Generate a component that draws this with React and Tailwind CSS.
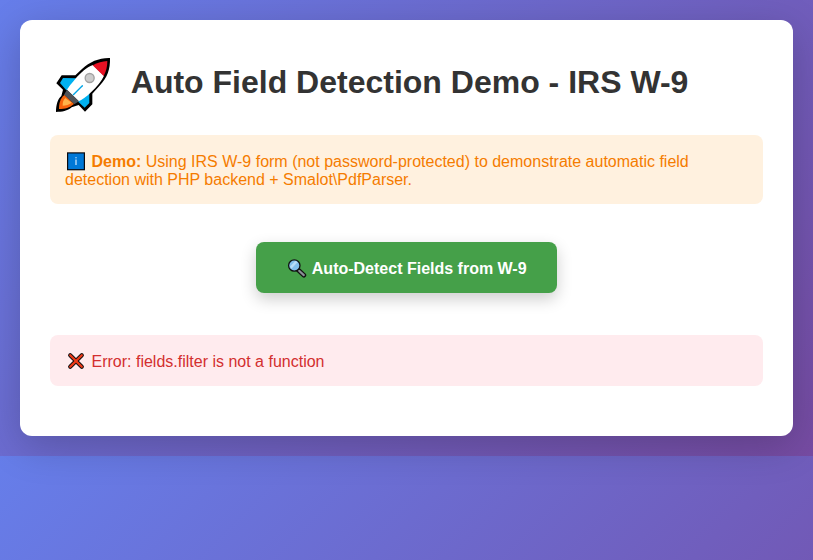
function Rocket() {
  return (
    <svg className="mr-2 h-[60px] w-[72px] shrink-0" viewBox="15 30 216 180" aria-hidden="true">
      <path
        d="M195 39C163 38 135 50 111 72L91 91L50 91L34 115L54 134L49 153C38 162 33 181 33 201C50 201 68 198 80 187L101 180L120 200L142 178L142 146L165 121C187 97 196 73 195 39Z"
        fill="#000"
      />
      <path d="M98 100L54 99L45 114L64 136L80 130Z" fill="#00b1f0" />
      <path d="M133 139L98 169L119 188L133 174Z" fill="#00b1f0" />
      <path d="M144 60C123 68 109 82 95 97C80 115 70 127 66 135L101 169C110 165 124 156 138 142C157 123 170 108 177 92Z" fill="#fff" />
      <path d="M143 61C158 53 172 49 187 48C187 63 184 78 176 93Z" fill="#e81224" />
      <path d="M66 134L57 149L88 178L102 169Z" fill="#4f5358" />
      <path d="M58 150C46 160 42 174 42 192C61 192 73 189 87 177Z" fill="#f7630c" />
      <path d="M61 159C54 166 53 173 53 182C63 181 72 179 80 173Z" fill="#ffb34a" />
      <path d="M85 149L112 122" stroke="#00a6e8" strokeWidth="4" strokeLinecap="round" />
      <circle cx="134" cy="99" r="13.5" fill="#ccc" stroke="#a2a2a2" strokeWidth="4" />
    </svg>
  );
}

function Info() {
  return (
    <svg className="mr-[4.5px] h-5 w-[22px] shrink-0" viewBox="0 0 22 20" aria-hidden="true">
      <rect x="2" y="1.3" width="18" height="18" fill="#0b0b10" />
      <rect x="3.2" y="2.5" width="15.6" height="15.6" fill="#0078d7" />
      <path d="M11 8.5V14" stroke="#d8ecff" strokeWidth="1.2" />
      <circle cx="11" cy="6.7" r=".7" fill="#d8ecff" />
    </svg>
  );
}

function Magnifier() {
  return (
    <svg className="mr-[3.8px] h-5 w-[22px] shrink-0" viewBox="0 0 22 20" aria-hidden="true">
      <path d="M12 11.8L17.9 17.2" stroke="#111" strokeWidth="4.6" strokeLinecap="round" />
      <path d="M13.1 12.8L17.8 17.1" stroke="#8a8f96" strokeWidth="2.2" strokeLinecap="round" />
      <circle cx="8.3" cy="7.5" r="5.7" fill="#83beec" stroke="#111" strokeWidth="1.3" />
      <path d="M4 8.5L9.3 3.1L11.5 4.2L5.4 10.7Z" fill="#b9dcf7" />
    </svg>
  );
}

function Cross() {
  return (
    <svg className="mr-[4.5px] h-5 w-[22px] shrink-0" viewBox="0 0 22 20" aria-hidden="true">
      <path d="M5.2 4.2L16.8 15.8M16.8 4.2L5.2 15.8" stroke="#151010" strokeWidth="4.2" strokeLinecap="round" />
      <path d="M5.2 4.2L16.8 15.8M16.8 4.2L5.2 15.8" stroke="#f03a17" strokeWidth="2.2" strokeLinecap="round" />
    </svg>
  );
}

export default function App() {
  return (
    <div className="h-[560px] bg-[linear-gradient(135deg,#667eea_0%,#764ba2_100%)] bg-[length:813px_456px] bg-repeat p-5 font-['Liberation_Sans',Arial,sans-serif] text-base leading-[18px]">
      <main className="h-[416px] rounded-xl bg-white px-[30px] pt-[35px] shadow-[0_10px_40px_rgba(0,0,0,0.2)]">
        <h1 className="flex h-[60px] items-center text-[32px] leading-9 font-bold text-[#333]">
          <Rocket />
          <span className="-mt-1.5 ml-[0.8px] whitespace-nowrap">Auto Field Detection Demo - IRS W-9</span>
        </h1>

        <div className="mt-5 h-[69px] rounded-lg bg-[#fff1df] px-[15px] pt-4 text-[#f57c00]">
          <div className="flex h-5 items-start whitespace-pre">
            <Info />
            <strong className="pt-0.5">Demo:</strong>
            <span className="pt-0.5"> Using IRS W-9 form (not password-protected) to demonstrate automatic field</span>
          </div>
          <div>detection with PHP backend + Smalot\PdfParser.</div>
        </div>

        <div className="mt-[38px] flex justify-center">
          <button className="flex h-[51px] w-[301px] items-center rounded-lg bg-[#45a049] pr-[30px] pl-[30px] font-bold whitespace-nowrap text-white shadow-[0_6px_16px_rgba(0,0,0,0.2)]">
            <Magnifier />
            <span className="pt-[3px]">Auto-Detect Fields from W-9</span>
          </button>
        </div>

        <div className="mt-[42px] flex h-[51px] items-center rounded-lg bg-[#ffebee] px-[15px] pt-px text-[#d32f2f]">
          <Cross />
          <span className="pt-0.5">Error: fields.filter is not a function</span>
        </div>
      </main>
    </div>
  );
}
